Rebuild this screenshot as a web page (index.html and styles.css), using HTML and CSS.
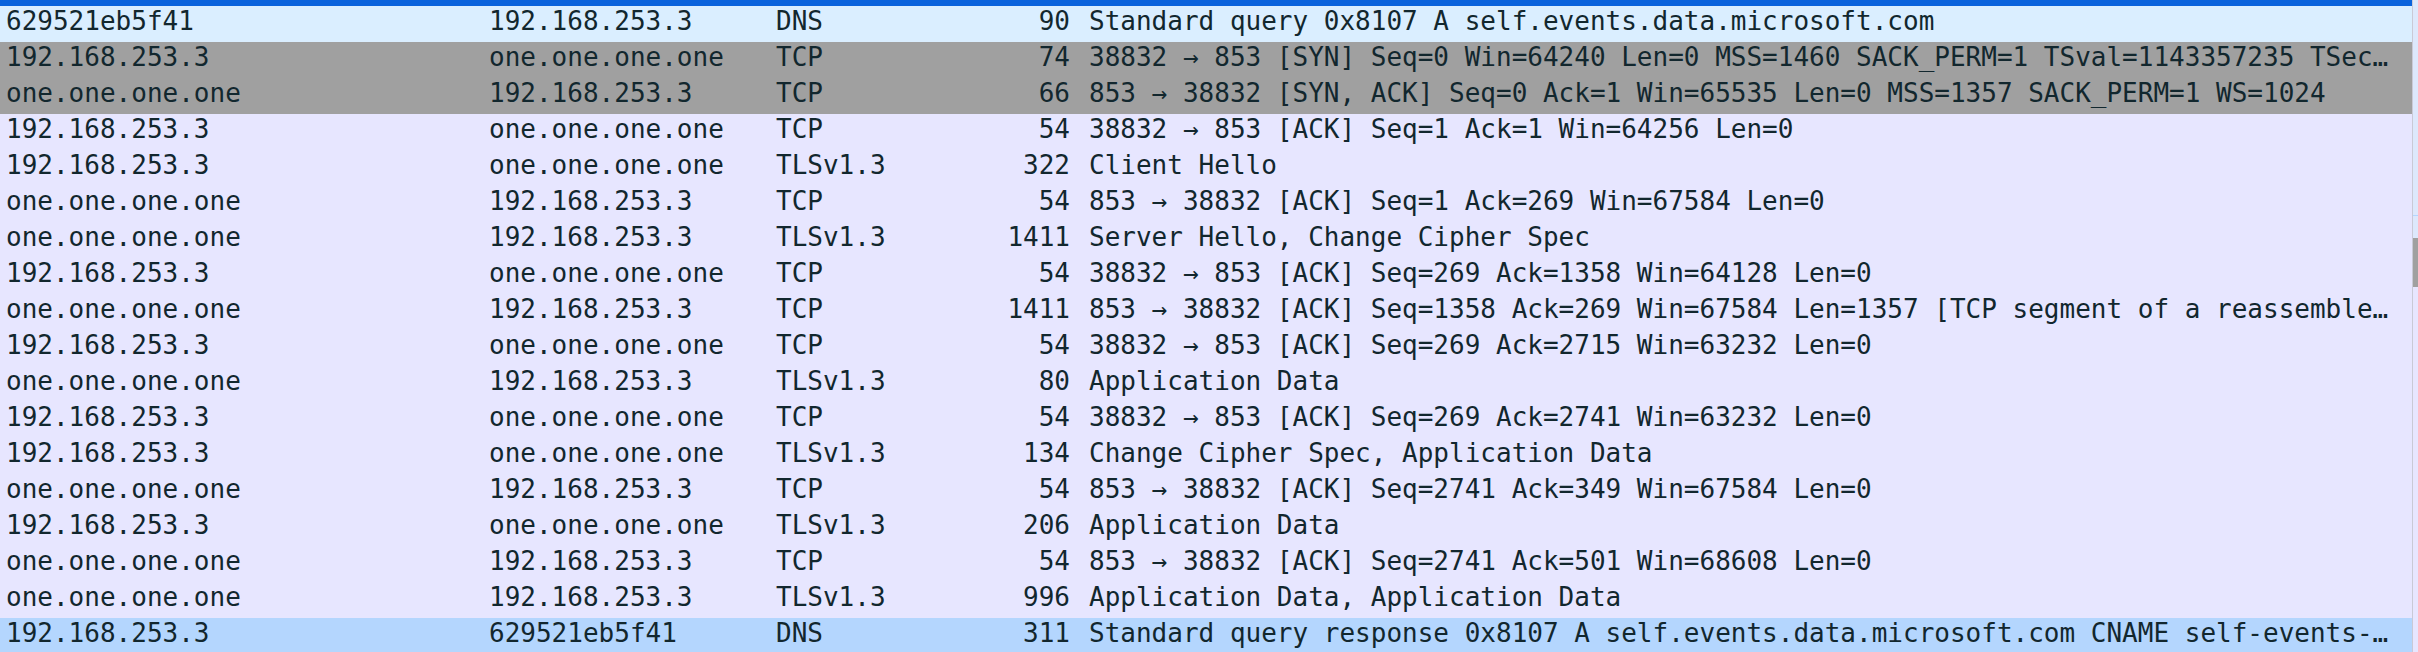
FILE: index.html
```html
<!DOCTYPE html>
<html lang="en">
<head>
<meta charset="utf-8">
<title>Packet list</title>
<link rel="stylesheet" href="styles.css">
</head>
<body>
<div class="app">
  <div class="list">
    <div class="topbar"></div>
    <div class="row udp"><span class="c src">629521eb5f41</span><span class="c dst">192.168.253.3</span><span class="c proto">DNS</span><span class="c len">90</span><span class="c info">Standard query 0x8107 A self.events.data.microsoft.com</span></div>
    <div class="row syn"><span class="c src">192.168.253.3</span><span class="c dst">one.one.one.one</span><span class="c proto">TCP</span><span class="c len">74</span><span class="c info">38832 → 853 [SYN] Seq=0 Win=64240 Len=0 MSS=1460 SACK_PERM=1 TSval=1143357235 TSec…</span></div>
    <div class="row syn"><span class="c src">one.one.one.one</span><span class="c dst">192.168.253.3</span><span class="c proto">TCP</span><span class="c len">66</span><span class="c info">853 → 38832 [SYN, ACK] Seq=0 Ack=1 Win=65535 Len=0 MSS=1357 SACK_PERM=1 WS=1024</span></div>
    <div class="row tcp"><span class="c src">192.168.253.3</span><span class="c dst">one.one.one.one</span><span class="c proto">TCP</span><span class="c len">54</span><span class="c info">38832 → 853 [ACK] Seq=1 Ack=1 Win=64256 Len=0</span></div>
    <div class="row tcp"><span class="c src">192.168.253.3</span><span class="c dst">one.one.one.one</span><span class="c proto">TLSv1.3</span><span class="c len">322</span><span class="c info">Client Hello</span></div>
    <div class="row tcp"><span class="c src">one.one.one.one</span><span class="c dst">192.168.253.3</span><span class="c proto">TCP</span><span class="c len">54</span><span class="c info">853 → 38832 [ACK] Seq=1 Ack=269 Win=67584 Len=0</span></div>
    <div class="row tcp"><span class="c src">one.one.one.one</span><span class="c dst">192.168.253.3</span><span class="c proto">TLSv1.3</span><span class="c len">1411</span><span class="c info">Server Hello, Change Cipher Spec</span></div>
    <div class="row tcp"><span class="c src">192.168.253.3</span><span class="c dst">one.one.one.one</span><span class="c proto">TCP</span><span class="c len">54</span><span class="c info">38832 → 853 [ACK] Seq=269 Ack=1358 Win=64128 Len=0</span></div>
    <div class="row tcp"><span class="c src">one.one.one.one</span><span class="c dst">192.168.253.3</span><span class="c proto">TCP</span><span class="c len">1411</span><span class="c info">853 → 38832 [ACK] Seq=1358 Ack=269 Win=67584 Len=1357 [TCP segment of a reassemble…</span></div>
    <div class="row tcp"><span class="c src">192.168.253.3</span><span class="c dst">one.one.one.one</span><span class="c proto">TCP</span><span class="c len">54</span><span class="c info">38832 → 853 [ACK] Seq=269 Ack=2715 Win=63232 Len=0</span></div>
    <div class="row tcp"><span class="c src">one.one.one.one</span><span class="c dst">192.168.253.3</span><span class="c proto">TLSv1.3</span><span class="c len">80</span><span class="c info">Application Data</span></div>
    <div class="row tcp"><span class="c src">192.168.253.3</span><span class="c dst">one.one.one.one</span><span class="c proto">TCP</span><span class="c len">54</span><span class="c info">38832 → 853 [ACK] Seq=269 Ack=2741 Win=63232 Len=0</span></div>
    <div class="row tcp"><span class="c src">192.168.253.3</span><span class="c dst">one.one.one.one</span><span class="c proto">TLSv1.3</span><span class="c len">134</span><span class="c info">Change Cipher Spec, Application Data</span></div>
    <div class="row tcp"><span class="c src">one.one.one.one</span><span class="c dst">192.168.253.3</span><span class="c proto">TCP</span><span class="c len">54</span><span class="c info">853 → 38832 [ACK] Seq=2741 Ack=349 Win=67584 Len=0</span></div>
    <div class="row tcp"><span class="c src">192.168.253.3</span><span class="c dst">one.one.one.one</span><span class="c proto">TLSv1.3</span><span class="c len">206</span><span class="c info">Application Data</span></div>
    <div class="row tcp"><span class="c src">one.one.one.one</span><span class="c dst">192.168.253.3</span><span class="c proto">TCP</span><span class="c len">54</span><span class="c info">853 → 38832 [ACK] Seq=2741 Ack=501 Win=68608 Len=0</span></div>
    <div class="row tcp"><span class="c src">one.one.one.one</span><span class="c dst">192.168.253.3</span><span class="c proto">TLSv1.3</span><span class="c len">996</span><span class="c info">Application Data, Application Data</span></div>
    <div class="row selected"><span class="c src">192.168.253.3</span><span class="c dst">629521eb5f41</span><span class="c proto">DNS</span><span class="c len">311</span><span class="c info">Standard query response 0x8107 A self.events.data.microsoft.com CNAME self-events-…</span></div>
  </div>
  <div class="divider"></div>
  <div class="minimap">
    <div class="mm mm-udp"></div>
    <div class="mm mm-line"></div>
    <div class="mm mm-udp2"></div>
    <div class="mm mm-thumb"></div>
    <div class="mm mm-tcp"></div>
  </div>
</div>
</body>
</html>
```

FILE: styles.css
```css
html, body {
  margin: 0;
  padding: 0;
  overflow: hidden;
  background: #e7e6ff;
}

.app {
  display: flex;
  width: 2418px;
  height: 652px;
  overflow: hidden;
}

.list {
  flex: 0 0 2412px;
  display: flex;
  flex-direction: column;
  font-family: "DejaVu Sans Mono", "Liberation Mono", monospace;
  font-size: 26px;
  color: #12272e;
}

.topbar {
  flex: 0 0 6px;
  background: #0a62dc;
}

.row {
  flex: 0 0 36px;
  display: grid;
  grid-template-columns: 483px 287px 220px 86px 1fr;
  line-height: 30px;
  white-space: nowrap;
  overflow: hidden;
}

.c {
  padding: 0 6px;
  overflow: hidden;
}

.len {
  text-align: right;
}

.info {
  padding-left: 13px;
}

.udp { background: #daeeff; }
.syn { background: #a0a0a0; }
.tcp { background: #e7e6ff; }
.selected { background: #b4d6fe; }

.divider {
  flex: 0 0 1px;
  background: #c9c9d6;
}

.minimap {
  flex: 0 0 5px;
  display: flex;
  flex-direction: column;
}

.mm-udp { flex: 0 0 215px; background: #dde8fc; }
.mm-line { flex: 0 0 1px; background: #b4d6fe; }
.mm-udp2 { flex: 0 0 22px; background: #dde8fc; }
.mm-thumb { flex: 0 0 49px; background: #a0a0a0; }
.mm-tcp { flex: 1 1 auto; background: #e7e6ff; }
```
